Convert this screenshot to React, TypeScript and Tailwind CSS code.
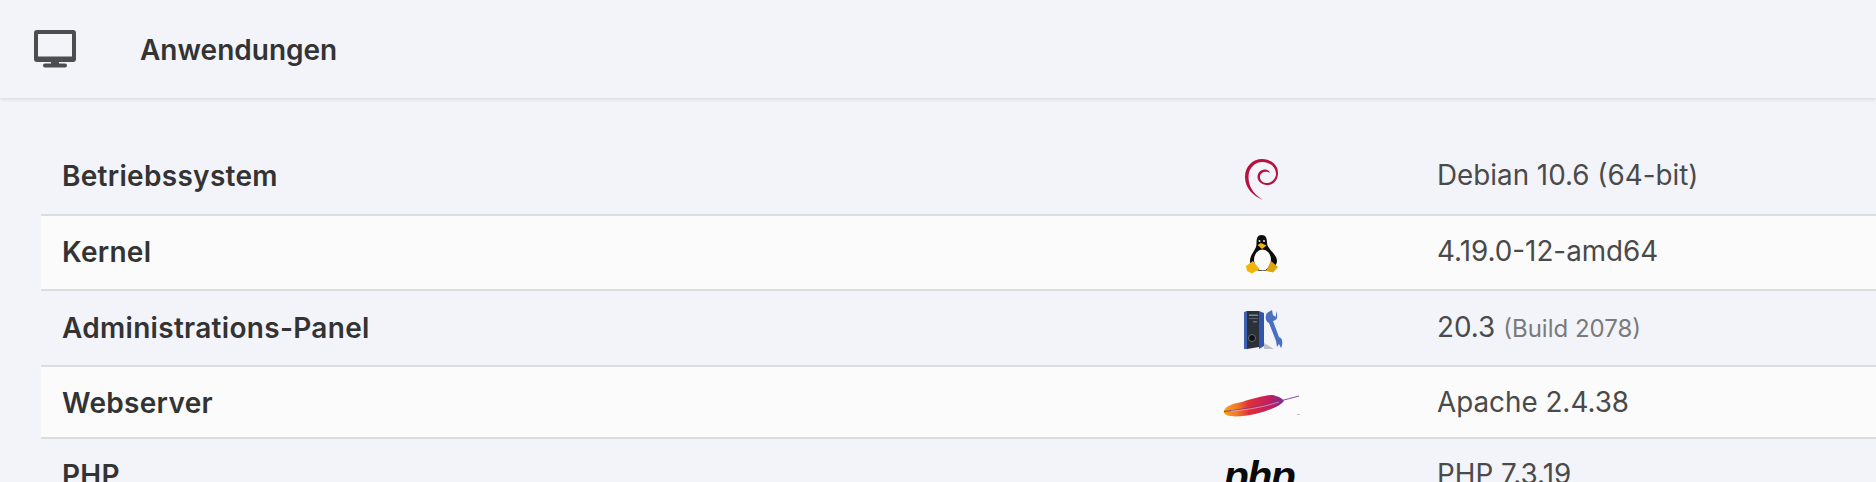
import React from "react";

const rows = [
  { name: "Betriebssystem", value: "Debian 10.6 (64-bit)", h: "h-[80px] pt-[2px]", bg: "bg-[#f3f4fa]", shift: "mt-[8px]", icon: <Debian /> },
  { name: "Kernel", value: "4.19.0-12-amd64", h: "h-[75px] pb-[2px]", bg: "bg-[#fbfbfb]", shift: "mt-[6px]", icon: <Tux /> },
  { name: "Administrations-Panel", value: "20.3", build: "(Build 2078)", h: "h-[76px]", bg: "bg-[#f3f4fa]", shift: "mt-[4px]", icon: <Panel /> },
  { name: "Webserver", value: "Apache 2.4.38", h: "h-[72px] pt-[2px]", bg: "bg-[#fbfbfb]", shift: "mt-[4px]", icon: <Feather /> },
  { name: "PHP", value: "PHP 7.3.19", h: "h-[73px]", bg: "bg-[#f3f4fa]", shift: "mt-0", icon: <PhpLogo /> },
];

function Debian() {
  return (
    <svg width="60" height="60" viewBox="0 0 60 60">
      <path
        d="M32 50C22 46 14 38 14 27C14 16 22 9 31 9C40 9 47 15 47 23C47 31 41 36 35 35C30 34 26.5 31 26.5 27C26.5 22.5 30 19.5 34 19.5C36.5 19.5 38.5 21 39 23C37 21.5 35 21.5 33 22C30 23 28.5 25 29 28C30 32 33 33 36 33C41 33 45 28 45 24C45 17 39 12 31.5 12C24 12 17.5 18 17.5 27C17.5 38 24 45 32 50Z"
        fill="#b5123f"
      />
    </svg>
  );
}

function Tux() {
  return (
    <svg width="60" height="60" viewBox="0 0 60 60">
      <path d="M30.5 10C26 10 25.5 14 25.5 19C25.5 25 19 29 19 36C19 42 24 46 31 46C38 46 46 42 46 36C46 29 36 24 36 18C36 13 35 10 30.5 10Z" fill="#0c0c0c" />
      <ellipse cx="31.5" cy="35" rx="8.5" ry="10.5" fill="#fafafa" />
      <path d="M26.5 20L30 18L35.5 20.5L31 24Z" fill="#f2b50a" />
      <circle cx="28.5" cy="16" r="1" fill="#e8e8e8" />
      <circle cx="33" cy="16" r="1" fill="#e8e8e8" />
      <path d="M15 41L22 36L28.5 44L21 48.5L16 46Z" fill="#f3b40a" />
      <path d="M47 42L40 36L35 46L42 47.5Z" fill="#dca510" />
    </svg>
  );
}

function Panel() {
  return (
    <svg width="60" height="60" viewBox="0 0 60 60">
      <path d="M33 43L43 49H33Z" fill="#bfc0c6" />
      <path d="M13 12L16 11V49L13 49Z" fill="#3f62b0" />
      <path d="M16 11H28V47L16 49Z" fill="#2c3038" />
      <rect x="18" y="14.5" width="9" height="1.5" fill="#7d8794" />
      <rect x="18" y="18" width="9" height="1" fill="#5a6472" />
      <rect x="22" y="21" width="4" height="1.5" fill="#4c6fb5" />
      <circle cx="21" cy="38" r="3.5" fill="#0e1116" stroke="#767d88" strokeWidth="0.8" />
      <path d="M28 11L33 13V46L28 49Z" fill="#2f55ad" />
      <path d="M36 13L41 10L42 15L45 17L45 11C47 16 47 20 42 21L48 37C52 38 52 44 50 48L48 44L46 47L45 41L38 23C34 21 34 16 36 13Z" fill="#4a70c2" />
    </svg>
  );
}

function Feather() {
  return (
    <svg width="100" height="40" viewBox="0 0 100 40">
      <defs>
        <linearGradient id="feather" x1="0" x2="1" y1="0" y2="0">
          <stop offset="0" stopColor="#f8a31c" />
          <stop offset="0.22" stopColor="#f07a25" />
          <stop offset="0.42" stopColor="#e02e3a" />
          <stop offset="0.75" stopColor="#c31f5d" />
          <stop offset="1" stopColor="#7c2a8d" />
        </linearGradient>
      </defs>
      <path d="M12.7 27C13 22 21 18.5 31 17C40 14 52 10.5 62 10C66 11.5 70 12 73 16C69 21 60 25 44 29C30 32 14 33 12.7 27Z" fill="url(#feather)" />
      <path d="M13 26.5C38 24 62 18 88 11" stroke="#7f3494" strokeWidth="0.9" fill="none" />
      <path d="M20 26C36 25 52 22 68 17" stroke="#fbe3d8" strokeWidth="0.5" fill="none" />
      <rect x="86.5" y="29" width="2" height="1" fill="#a8a8ae" />
    </svg>
  );
}

function PhpLogo() {
  return (
    <span className="-ml-[4px] block pt-[4px] font-['Liberation_Sans',sans-serif] text-[41px] leading-none font-bold italic tracking-[-1.5px] text-[#0a0a0a]">
      php
    </span>
  );
}

function Monitor() {
  return (
    <svg width="42" height="38" viewBox="0 0 42 38">
      <path fillRule="evenodd" d="M3 0H39A3 3 0 0 1 42 3V29A3 3 0 0 1 39 32H3A3 3 0 0 1 0 29V3A3 3 0 0 1 3 0ZM4 4V26.5H38V4Z" fill="#4d4d4f" />
      <rect x="17" y="31" width="8" height="4" fill="#4d4d4f" />
      <rect x="9" y="33.5" width="24" height="4" rx="2" fill="#4d4d4f" />
    </svg>
  );
}

export default function App() {
  return (
    <div className="h-[482px] overflow-hidden bg-[#f3f4fa] font-['Inter',sans-serif] text-[#333]">
      <header className="flex h-[98px] items-center shadow-[0_1px_4px_rgba(0,0,0,0.14)]">
        <div className="ml-[34px] w-[106px]">
          <Monitor />
        </div>
        <h1 className="pt-[2px] text-[28px] font-semibold">Anwendungen</h1>
      </header>
      <div className="ml-[41px] mt-[38px]">
        {rows.map((r) => (
          <div key={r.name} className={`grid grid-cols-[1130px_180px_1fr] items-center border-b-2 border-[#dcdce0] ${r.h} ${r.bg}`}>
            <div className="pl-[21px] text-[28px] font-semibold tracking-[0.3px]">{r.name}</div>
            <div className={`flex justify-center ${r.shift}`}>{r.icon}</div>
            <div className="pl-[86px] text-[27.8px] text-[#4a4a4a]">
              {r.value}
              {r.build && <span className="ml-[8px] text-[24px] text-[#7a7a7a]">{r.build}</span>}
            </div>
          </div>
        ))}
      </div>
    </div>
  );
}
